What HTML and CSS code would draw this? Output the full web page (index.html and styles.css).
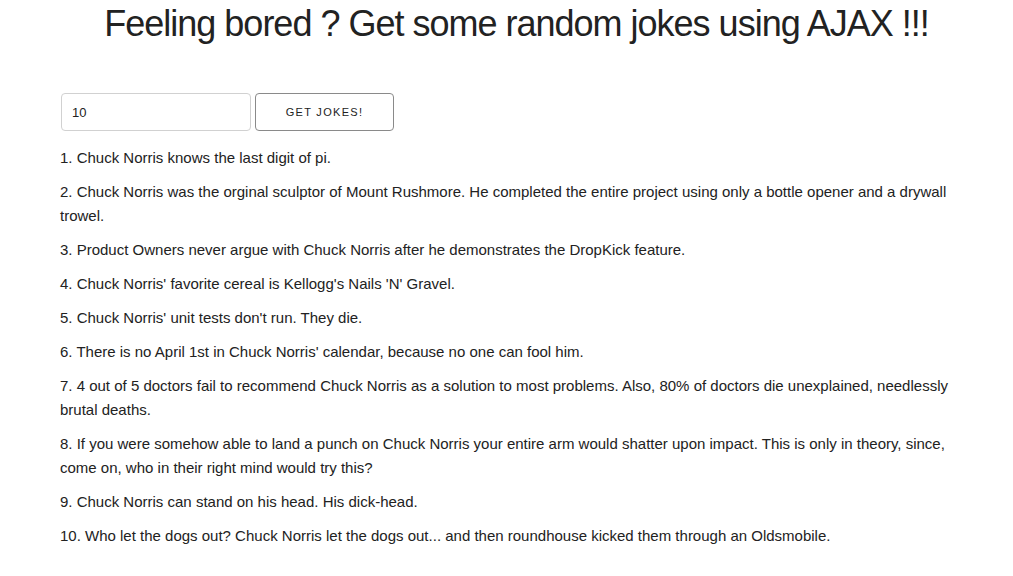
FILE: index.html
```html
<!DOCTYPE html>
<html>
<head>
<meta charset="utf-8">
<title>Jokes</title>
<link rel="stylesheet" href="styles.css">
</head>
<body>
<div class="container">
  <h1 class="title">Feeling bored ? Get some random jokes using AJAX !!!</h1>
  <form class="form">
    <input class="count" type="number" value="10">
    <button class="btn" type="button">Get Jokes!</button>
  </form>
  <ul class="jokes">
    <li>1. Chuck Norris knows the last digit of pi.</li>
    <li>2. Chuck Norris was the orginal sculptor of Mount Rushmore. He completed the entire project using only a bottle opener and a drywall trowel.</li>
    <li>3. Product Owners never argue with Chuck Norris after he demonstrates the DropKick feature.</li>
    <li>4. Chuck Norris' favorite cereal is Kellogg's Nails 'N' Gravel.</li>
    <li>5. Chuck Norris' unit tests don't run. They die.</li>
    <li>6. There is no April 1st in Chuck Norris' calendar, because no one can fool him.</li>
    <li>7. 4 out of 5 doctors fail to recommend Chuck Norris as a solution to most problems. Also, 80% of doctors die unexplained, needlessly brutal deaths.</li>
    <li>8. If you were somehow able to land a punch on Chuck Norris your entire arm would shatter upon impact. This is only in theory, since, come on, who in their right mind would try this?</li>
    <li>9. Chuck Norris can stand on his head. His dick-head.</li>
    <li>10. Who let the dogs out? Chuck Norris let the dogs out... and then roundhouse kicked them through an Oldsmobile.</li>
  </ul>
</div>
</body>
</html>
```

FILE: styles.css
```css
html, body {
  margin: 0;
  padding: 0;
  background: #fff;
}
body {
  font-family: "Liberation Sans", Arial, sans-serif;
  font-size: 15px;
  line-height: 1.6;
  color: #222;
}
.container {
  width: 893px;
  margin: 0 auto;
}
.title {
  margin: 2px 0 0;
  padding-left: 20px;
  font-size: 36px;
  font-weight: 400;
  line-height: 1.2;
  letter-spacing: -1px;
  text-align: center;
  color: #222;
}
.form {
  display: flex;
  gap: 4px;
  margin: 48px 0 0 1px;
}
.count {
  box-sizing: border-box;
  width: 190px;
  height: 38px;
  padding: 6px 10px;
  border: 1px solid #d1d1d1;
  border-radius: 4px;
  font-family: "Liberation Sans", Arial, sans-serif;
  font-size: 13px;
  color: #222;
  background: #fff;
  -moz-appearance: textfield;
}
.count::-webkit-inner-spin-button,
.count::-webkit-outer-spin-button {
  -webkit-appearance: none;
  margin: 0;
}
.btn {
  box-sizing: border-box;
  width: 139px;
  height: 38px;
  padding: 0 20px;
  border: 1px solid #8a8a8a;
  border-radius: 4px;
  background: transparent;
  font-family: "Liberation Sans", Arial, sans-serif;
  font-size: 11px;
  font-weight: 400;
  letter-spacing: 1.3px;
  text-transform: uppercase;
  color: #222;
}
.jokes {
  list-style: none;
  margin: 15px 0 0;
  padding: 0;
}
.jokes li {
  margin: 0 0 10px;
}
```
